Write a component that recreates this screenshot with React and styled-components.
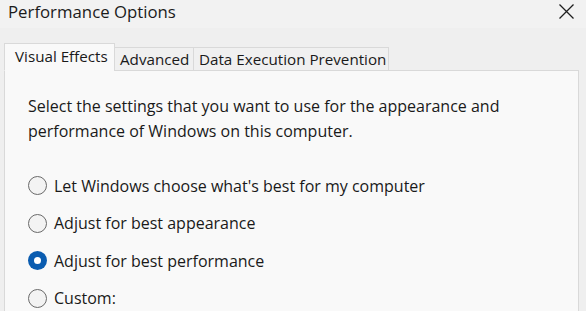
import React, { useState } from "react";
import styled, { createGlobalStyle } from "styled-components";

const Global = createGlobalStyle`
  html, body { margin: 0; padding: 0; }
  body {
    width: 586px; height: 311px; overflow: hidden;
    background: #efefef;
    font-family: "Open Sans", "Noto Sans", sans-serif;
    color: #1a1a1a;
  }
`;

const Window = styled.div`
  width: 586px;
  height: 311px;
  display: flex;
  flex-direction: column;
  overflow: hidden;
`;

const TitleBar = styled.div`
  height: 28px;
  display: flex;
  align-items: center;
  justify-content: space-between;
  padding: 0 12px 0 8px;
  background: #f2f2f2;
`;

const Title = styled.div`
  font-size: 16.8px;
  line-height: 28px;
  margin-top: -4px;
  color: #1b1b1b;
`;

const CloseButton = styled.button`
  border: 0;
  background: transparent;
  padding: 0;
  width: 16px;
  height: 16px;
  display: flex;
  align-items: center;
  justify-content: center;
  margin-top: -5px;
`;

const TabStrip = styled.div`
  display: flex;
  align-items: flex-end;
  margin: 15px 0 -1px 4px;
  position: relative;
  z-index: 1;
`;

const Tab = styled.div`
  font-size: 15.2px;
  box-sizing: border-box;
  border: 1px solid #d9d9d9;
  border-bottom: ${(p) => (p.$active ? "1px solid #f9f9f9" : "1px solid #d9d9d9")};
  background: ${(p) => (p.$active ? "#f9f9f9" : "#f0f0f0")};
  height: ${(p) => (p.$active ? "28px" : "24px")};
  padding: ${(p) => (p.$active ? "0 0 0 10px" : "0 0 0 5px")};
  width: ${(p) => p.$w}px;
  line-height: ${(p) => (p.$active ? "24px" : "22px")};
  margin-left: ${(p) => (p.$first ? "0" : "-1px")};
  white-space: nowrap;
`;

const Panel = styled.div`
  flex: 1;
  margin: 0 7px 0 4px;
  border: 1px solid #d9d9d9;
  border-bottom: 0;
  background: #f9f9f9;
  padding: 23px 0 0 23px;
`;

const Intro = styled.p`
  margin: 0;
  font-size: 16px;
  line-height: 25px;
  color: #1a1a1a;
`;

const Options = styled.div`
  display: flex;
  flex-direction: column;
  gap: 12.5px;
  margin-top: 29px;
`;

const Option = styled.label`
  display: flex;
  align-items: center;
  gap: 7px;
  height: 25px;
  font-size: 16px;
  color: #1a1a1a;
  cursor: default;
`;

const Radio = styled.span`
  box-sizing: border-box;
  width: 19px;
  height: 19px;
  border-radius: 50%;
  flex: none;
  display: flex;
  align-items: center;
  justify-content: center;
  border: ${(p) => (p.$checked ? "0" : "1px solid #6a6a6a")};
  background: ${(p) => (p.$checked ? "#0a5cb0" : "#f3f3f3")};
  &::after {
    content: "";
    display: ${(p) => (p.$checked ? "block" : "none")};
    width: 7px;
    height: 7px;
    border-radius: 50%;
    background: #ffffff;
  }
`;

const options = [
  "Let Windows choose what's best for my computer",
  "Adjust for best appearance",
  "Adjust for best performance",
  "Custom:",
];

export default function App() {
  const [sel, setSel] = useState(2);
  return (
    <Window>
      <Global />
      <TitleBar>
        <Title>Performance Options</Title>
        <CloseButton aria-label="Close">
          <svg width="15" height="15" viewBox="0 0 15 15">
            <path d="M0.5 0.5 L14.5 14.5 M14.5 0.5 L0.5 14.5" stroke="#1f1f1f" strokeWidth="1.3" fill="none" />
          </svg>
        </CloseButton>
      </TitleBar>
      <TabStrip>
        <Tab $active $first $w={111}>Visual Effects</Tab>
        <Tab $w={80}>Advanced</Tab>
        <Tab $w={196}>Data Execution Prevention</Tab>
      </TabStrip>
      <Panel>
        <Intro>
          Select the settings that you want to use for the appearance and
          <br />
          performance of Windows on this computer.
        </Intro>
        <Options>
          {options.map((o, i) => (
            <Option key={o} onClick={() => setSel(i)}>
              <Radio $checked={sel === i} />
              {o}
            </Option>
          ))}
        </Options>
      </Panel>
    </Window>
  );
}
